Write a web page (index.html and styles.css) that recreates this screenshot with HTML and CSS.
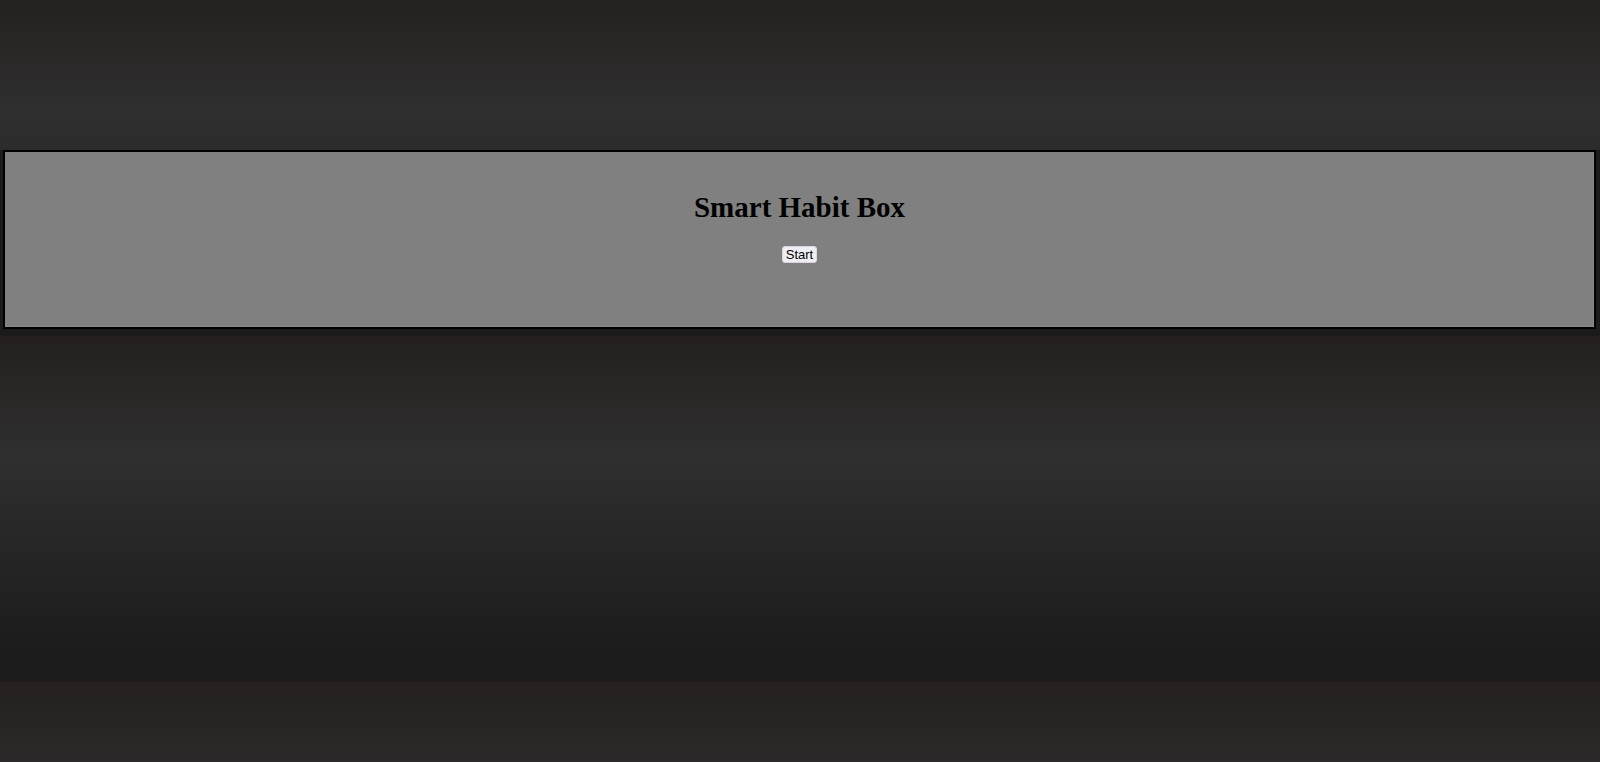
FILE: index.html
```html
<!DOCTYPE html>
<html lang="en">
<head>
<meta charset="utf-8">
<title>Smart Habit Box</title>
<link rel="stylesheet" href="styles.css">
</head>
<body>
  <div class="frame">
    <section class="box">
      <h1 class="title">Smart Habit Box</h1>
      <button class="start-btn" type="button">Start</button>
    </section>
  </div>
</body>
</html>
```

FILE: styles.css
```css
html {
  min-height: 100%;
  background-color: #231f1f;
  background-image: linear-gradient(#251f1f 0%, #2f2f2f 35%, #1c1c1c 90%, #1b1b1b 100%);
  background-size: 100% 345px;
  background-position: 0 -9px;
  background-repeat: repeat-y;
}

body {
  margin: 0;
  padding-top: 150px;
  font-family: "Liberation Serif", "Times New Roman", serif;
}

.frame {
  background: #1b1b1b;
  padding: 0 4px 7px 3px;
}

.box {
  background: #808080;
  border: 2px solid #000;
  box-shadow: inset -1px -1px 0 #8a8a8a;
  padding: 16px 0 64px;
  display: flex;
  flex-direction: column;
  align-items: center;
}

.title {
  margin: 23px 0 22px;
  font-size: 29px;
  font-weight: bold;
  color: #000;
  line-height: normal;
}

.start-btn {
  font-family: "Liberation Sans", Arial, sans-serif;
  font-size: 13px;
  line-height: 15px;
  color: #000;
  background: #efeff3;
  border: 1px solid #d8d8de;
  border-radius: 3px;
  padding: 0 3px;
  margin: 0;
}
```
